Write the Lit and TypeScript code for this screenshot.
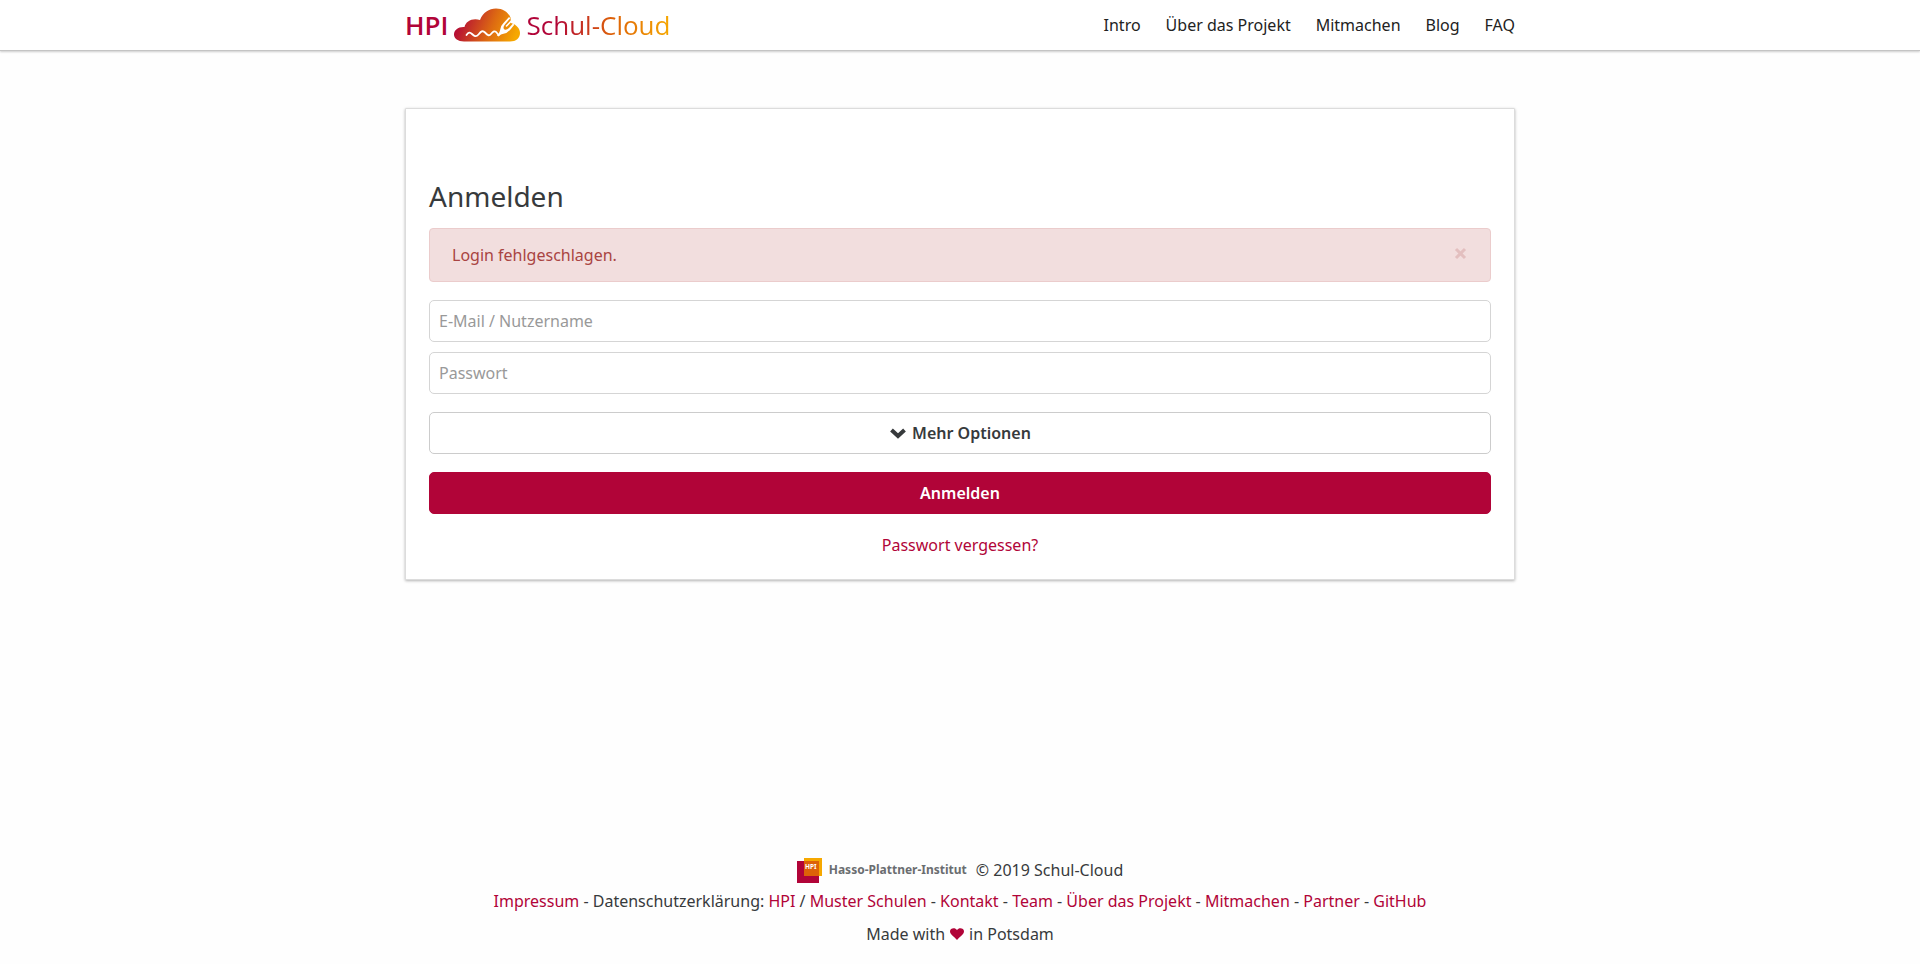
import { LitElement, html, css } from "lit";
import { customElement } from "lit/decorators.js";

const NAV = ["Intro", "Über das Projekt", "Mitmachen", "Blog", "FAQ"];
const FOOTER_LINKS = ["Kontakt", "Team", "Über das Projekt", "Mitmachen", "Partner", "GitHub"];

@customElement("cloud-logo")
class CloudLogo extends LitElement {
  static styles = css`
    :host { display: block; }
    .logo { display: flex; align-items: center; gap: 6px; text-decoration: none; line-height: 34px; font-family: "Open Sans", "Noto Sans", sans-serif; }
    .hpi { color: #b10438; font-weight: 600; font-size: 26px; }
    .cloud { display: block; width: 66px; height: 34px; }
    .name { font-size: 26px; color: transparent; background: linear-gradient(90deg, #b10438 20%, #dd6108 60%, #f6a800); background-clip: text; -webkit-background-clip: text; }
  `;
  render() {
    return html`
      <a class="logo" href="#" aria-label="HPI Schul-Cloud">
        <span class="hpi">HPI</span>
        <svg class="cloud" viewBox="0 0 66 34" aria-hidden="true">
          <defs>
            <linearGradient id="g" x1="0" y1="0.3" x2="1" y2="0.5">
              <stop offset="0.05" stop-color="#b10438" />
              <stop offset="0.6" stop-color="#dd6a12" />
              <stop offset="1" stop-color="#f6a800" />
            </linearGradient>
          </defs>
          <path fill="url(#g)" d="M10 33.500C4 33.500 0 30.500 0 26.500C0 22 4.500 18.500 10.500 19C11.500 13 19 9.500 26 12C29 4.500 35 .5 42 .5C49 .5 54 4 56.500 9.500L57 15C62.500 16.500 66 20.500 66 25C66 30 62 33.500 56 33.500Z" />
          <path fill="none" stroke="#fff" stroke-width="1.800" stroke-linecap="round" d="M12.500 27C14.500 24 16 24 18 26S22 29.500 24.500 26.500S28.500 22 31 24.500S35 28.500 37 26S41 22 43 25L44.500 27" />
          <path fill="#fff" d="M43 27.500Q45.500 25.500 46.500 20.500Q47 17.500 49.500 15L55 9L56.300 10.200L50.500 17Q48.500 20 50.500 21.500Q52.500 22.500 55 20L59 15.500L60.300 16.700L56.500 21.500Q53 25.500 49.500 25.800Q47 26 44.500 28.500Z" />
          <path fill="none" stroke="#fff" stroke-width="1.600" stroke-linecap="round" d="M52.500 18L58.300 12" />
        </svg>
        <span class="name">Schul-Cloud</span>
      </a>`;
  }
}

@customElement("app-root")
class AppRoot extends LitElement {
  static styles = css`
    * { box-sizing: border-box; }
    :host { display: flex; flex-direction: column; min-height: 100vh; background: #fefefe; color: #373a3c; font: 16px/26px "Noto Sans", "Open Sans", sans-serif; }
    a { color: #b10438; text-decoration: none; }
    .bar { background: #fff; border-bottom: 1px solid #c4c4c4; box-shadow: 0 1px 2px rgba(0, 0, 0, 0.2); }
    .container { width: 100%; max-width: 1140px; margin: 0 auto; padding: 0 15px; }
    .nav { display: flex; justify-content: space-between; align-items: center; height: 50px; }
    .menu { display: flex; gap: 25px; }
    .menu a { color: #222; }
    .card { margin-top: 57px; padding: 68px 23px 21px; background: #fff; border: 1px solid #dcdcdc; border-radius: 1px; box-shadow: 0 1px 3px rgba(0, 0, 0, 0.3); }
    .title { margin: 0 0 12px; font-size: 28px; line-height: 39px; font-weight: 400; }
    .alert { display: flex; justify-content: space-between; align-items: center; height: 54px; padding: 0 22px; margin-bottom: 18px; color: #a94442; background: #f2dede; border: 1px solid #ebcccc; border-radius: 4px; }
    .close { width: 16px; height: 28px; padding: 0; border: 0; background: none; color: #e3bfbf; }
    .close svg, .btn svg { display: block; }
    .form { display: flex; flex-direction: column; gap: 18px; }
    .fields { display: flex; flex-direction: column; gap: 10px; }
    .input, .btn { width: 100%; height: 42px; border-radius: 5px; font: inherit; color: inherit; background: #fff; }
    .input { border: 1px solid #d5d5d5; padding: 0 9px; }
    .input::placeholder { color: #999; opacity: 1; }
    .btn { display: flex; align-items: center; justify-content: center; gap: 5px; border: 1px solid #ccc; padding: 0; font-weight: 600; }
    .primary { background: #b10438; border-color: #b10438; color: #fff; }
    .forgot { text-align: center; }
    .footer { margin-top: auto; padding-bottom: 15px; text-align: center; }
    .line { display: flex; align-items: center; justify-content: center; min-height: 30px; }
    .links { line-height: 32px; }
    .copy { gap: 9px; }
    .brand { display: flex; align-items: center; gap: 7px; font-size: 12px; font-weight: 700; color: #6a6d70; }
    .made { margin-top: 2px; gap: 5px; }
  `;
  render() {
    return html`
      <header class="bar">
        <div class="container nav">
          <cloud-logo></cloud-logo>
          <nav class="menu">${NAV.map((t) => html`<a href="#">${t}</a>`)}</nav>
        </div>
      </header>
      <main class="container">
        <section class="card">
          <h1 class="title">Anmelden</h1>
          <div class="alert" role="alert">
            <span>Login fehlgeschlagen.</span>
            <button class="close" type="button" aria-label="Schließen">
              <svg width="16" height="24" viewBox="0 0 16 24"><path d="M4 6L13 15M13 6L4 15" stroke="currentColor" stroke-width="3" /></svg>
            </button>
          </div>
          <form class="form">
            <div class="fields">
              <input class="input" type="text" placeholder="E-Mail / Nutzername" aria-label="E-Mail / Nutzername" />
              <input class="input" type="password" placeholder="Passwort" aria-label="Passwort" />
            </div>
            <button class="btn" type="button">
              <svg width="18" height="18" viewBox="0 0 18 18" aria-hidden="true"><path d="M2.500 6L9 12L15.500 6" fill="none" stroke="currentColor" stroke-width="4" /></svg>
              Mehr Optionen
            </button>
            <button class="btn primary" type="button">Anmelden</button>
            <div class="forgot"><a href="#">Passwort vergessen?</a></div>
          </form>
        </section>
      </main>
      <footer class="container footer">
        <div class="line copy">
          <a class="brand" href="#">
            <svg width="25" height="25" viewBox="0 0 25 25" aria-hidden="true">
              <rect x="0" y="3" width="22" height="22" fill="#b10438" />
              <rect x="7" y="0" width="18" height="18" fill="#f6a800" />
              <rect x="7" y="3" width="15" height="15" fill="#dd6108" />
              <text x="8" y="11" font-size="6.500" font-weight="700" fill="#fff">HPI</text>
            </svg>
            <span>Hasso-Plattner-Institut</span>
          </a>
          <span>© 2019 Schul-Cloud</span>
        </div>
        <div class="links">
          <a href="#">Impressum</a> - Datenschutzerklärung: <a href="#">HPI</a> / <a href="#">Muster Schulen</a>${FOOTER_LINKS.map((t) => html` - <a href="#">${t}</a>`)}
        </div>
        <div class="line made">
          Made with
          <svg width="14" height="12" viewBox="0 0 14 12" role="img" aria-label="Herz"><path fill="#b10438" d="M7 12C4 8.500 0 6.500 0 3.300C0 .2 5-1.300 7 2.200C9-1.300 14 .2 14 3.300C14 6.500 10 8.500 7 12Z" /></svg>
          in Potsdam
        </div>
      </footer>
    `;
  }
}
